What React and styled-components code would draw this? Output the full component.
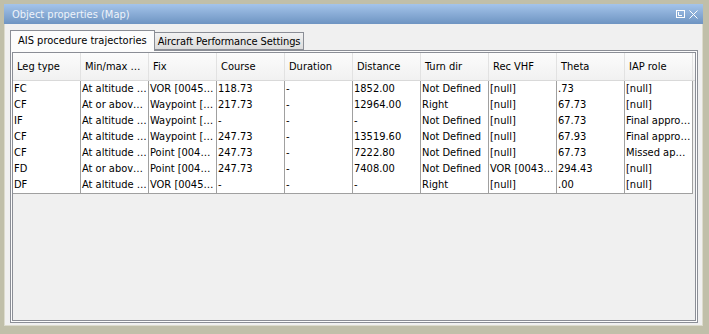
import React from 'react';
import styled, { createGlobalStyle } from 'styled-components';

const GlobalStyle = createGlobalStyle`
  html, body {
    margin: 0;
    padding: 0;
    background: #f0f0f0;
  }
  * {
    box-sizing: border-box;
  }
`;

const FONT = `"DejaVu Sans Condensed", "Liberation Sans", sans-serif`;

const Window = styled.div`
  width: 709px;
  height: 334px;
  display: flex;
  flex-direction: column;
  border-style: solid;
  border-color: #c0bfa9;
  border-width: 4px 6px 8px 4px;
  box-shadow: inset 0 0 0 1px #dcdbcd;
  background: #f0f0f0;
  font-family: ${FONT};
  font-size: 11px;
  color: #000;
`;

const TitleBar = styled.div`
  height: 20px;
  flex: none;
  display: flex;
  align-items: center;
  justify-content: space-between;
  padding: 0 5px 0 8px;
  background: linear-gradient(#a4c4ea, #6e94c2);
  color: #eef3fa;
`;

const TitleButtons = styled.div`
  display: flex;
  align-items: center;
  gap: 4px;
`;

const Body = styled.div`
  flex: 1;
  display: flex;
  flex-direction: column;
  padding: 6px 5px 3px 6px;
  min-height: 0;
`;

const TabStrip = styled.div`
  display: flex;
  align-items: flex-end;
  height: 20px;
  flex: none;
  position: relative;
  z-index: 1;
`;

const Tab = styled.div`
  height: ${(p) => (p.$active ? '21px' : '18px')};
  margin-bottom: ${(p) => (p.$active ? '-1px' : '0')};
  padding: ${(p) => (p.$active ? '0 7px 2px' : '0 3px')};
  display: flex;
  align-items: center;
  border: 1px solid #8b8e96;
  border-bottom: ${(p) => (p.$active ? 'none' : '1px solid #8b8e96')};
  border-left: ${(p) => (p.$active ? '1px solid #8b8e96' : 'none')};
  background: ${(p) => (p.$active ? '#fcfcfc' : 'linear-gradient(#f2f2f2, #dcdcdc)')};
  letter-spacing: ${(p) => (p.$active ? '0' : '-0.1px')};
  white-space: nowrap;
`;

const Panel = styled.div`
  flex: 1;
  display: flex;
  min-height: 0;
  border: 1px solid #8b8e96;
  padding: 1px;
  background: #fcfcfc;
`;

const ScrollPane = styled.div`
  flex: 1;
  border: 1px solid #8b8e96;
  background: #f0f0f0;
  overflow: hidden;
`;

const Row = styled.div`
  display: grid;
  grid-template-columns: repeat(10, 68px);
  background: ${(p) => (p.$header ? 'linear-gradient(#fcfcfc, #f1f1f1)' : '#fff')};
  border-bottom: ${(p) => (p.$header ? '1px solid #d9d9d9' : 'none')};
`;

const Rows = styled.div`
  width: 680px;
  border-bottom: 1px solid #a0a0a0;
`;

const HeadCell = styled.div`
  height: 27px;
  line-height: 28px;
  padding: 0 4px;
  border-right: 1px solid #e2e2e2;
  white-space: nowrap;
  overflow: hidden;
`;

const Cell = styled.div`
  height: 16px;
  line-height: 16px;
  padding: 0 1px;
  border-right: 1px solid #a0a0a0;
  white-space: nowrap;
  overflow: hidden;
  text-overflow: ellipsis;
`;

const columns = [
  'Leg type',
  'Min/max …',
  'Fix',
  'Course',
  'Duration',
  'Distance',
  'Turn dir',
  'Rec VHF',
  'Theta',
  'IAP role',
];

const data = [
  ['FC', 'At altitude …', 'VOR [0045…', '118.73', '-', '1852.00', 'Not Defined', '[null]', '.73', '[null]'],
  ['CF', 'At or abov…', 'Waypoint […', '217.73', '-', '12964.00', 'Right', '[null]', '67.73', '[null]'],
  ['IF', 'At altitude …', 'Waypoint […', '-', '-', '-', 'Not Defined', '[null]', '67.73', 'Final appro…'],
  ['CF', 'At altitude …', 'Waypoint […', '247.73', '-', '13519.60', 'Not Defined', '[null]', '67.93', 'Final appro…'],
  ['CF', 'At altitude …', 'Point [004…', '247.73', '-', '7222.80', 'Not Defined', '[null]', '67.73', 'Missed app…'],
  ['FD', 'At or abov…', 'Point [004…', '247.73', '-', '7408.00', 'Not Defined', 'VOR [0043…', '294.43', '[null]'],
  ['DF', 'At altitude …', 'VOR [0045…', '-', '-', '-', 'Right', '[null]', '.00', '[null]'],
];

const RestoreIcon = () => (
  <svg width="9" height="8" viewBox="0 0 9 8" fill="none" stroke="#fff" strokeWidth="1">
    <rect x="0.5" y="0.5" width="8" height="7" />
    <path d="M2.5 2V5.5H6" />
  </svg>
);

const CloseIcon = () => (
  <svg width="9" height="9" viewBox="0 0 9 9" fill="none" stroke="#fff" strokeWidth="1">
    <path d="M0.5 0.5L8.5 8.5M8.5 0.5L0.5 8.5" />
  </svg>
);

const App = () => (
  <>
    <GlobalStyle />
    <Window>
      <TitleBar>
        <span>Object properties (Map)</span>
        <TitleButtons>
          <RestoreIcon />
          <CloseIcon />
        </TitleButtons>
      </TitleBar>
      <Body>
        <TabStrip>
          <Tab $active>AIS procedure trajectories</Tab>
          <Tab>Aircraft Performance Settings</Tab>
        </TabStrip>
        <Panel>
          <ScrollPane>
            <Row $header>
              {columns.map((c) => (
                <HeadCell key={c}>{c}</HeadCell>
              ))}
            </Row>
            <Rows>
              {data.map((r, i) => (
                <Row key={i}>
                  {r.map((v, j) => (
                    <Cell key={j}>{v}</Cell>
                  ))}
                </Row>
              ))}
            </Rows>
          </ScrollPane>
        </Panel>
      </Body>
    </Window>
  </>
);

export default App;
